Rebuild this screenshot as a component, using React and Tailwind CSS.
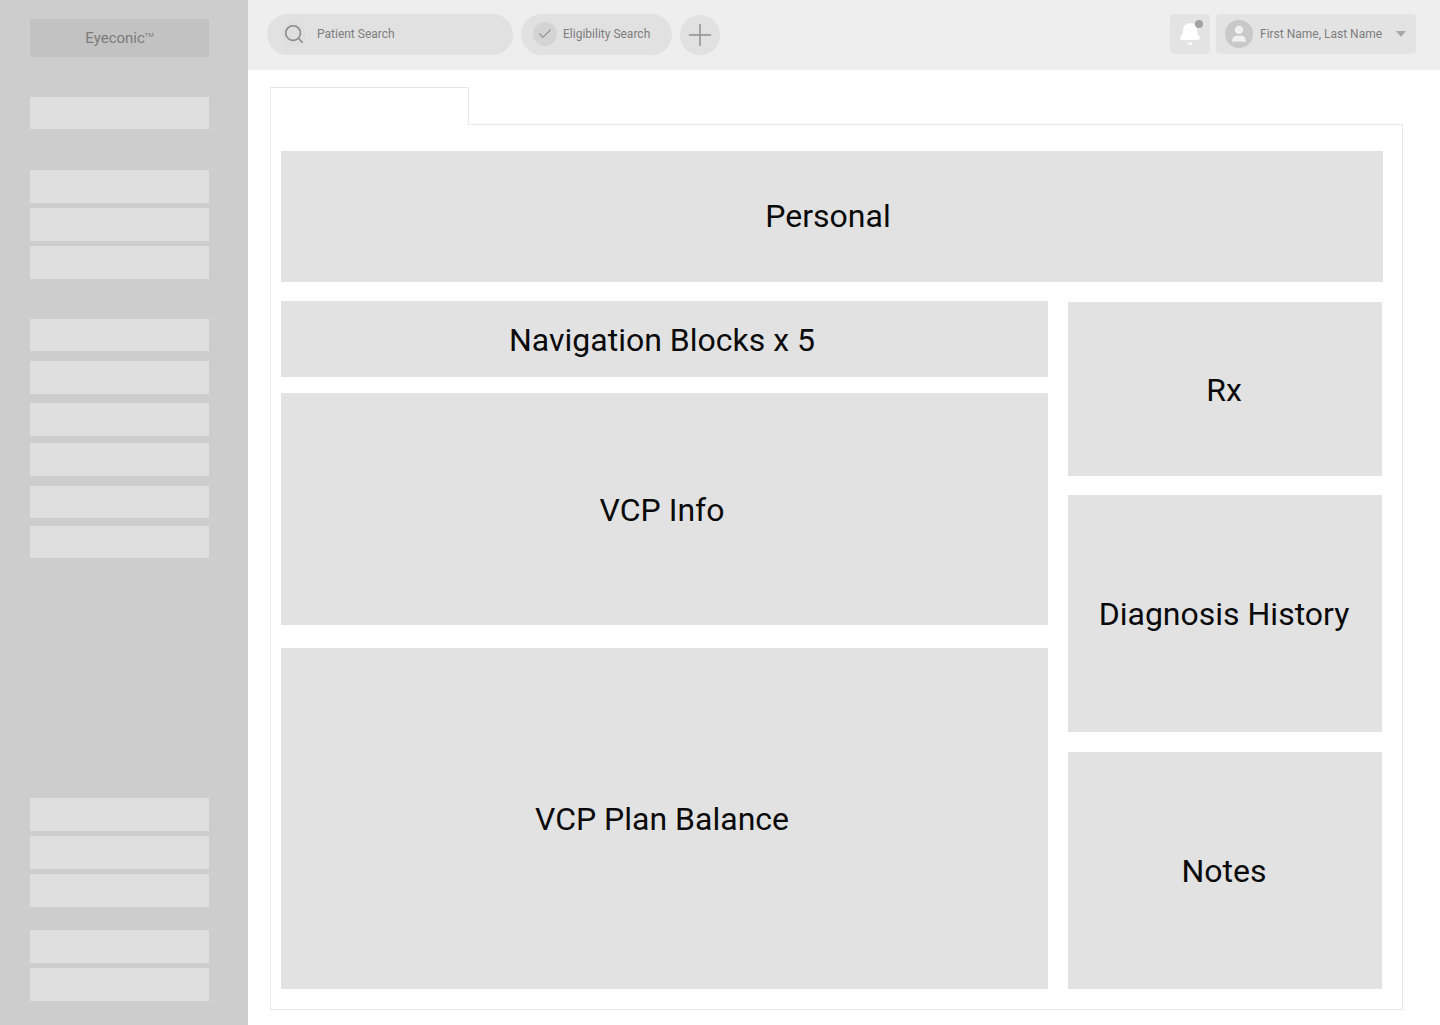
import { Search, Check, Plus, Bell, User } from "lucide-react";

const middleItems = [
  { h: 32, mt: 0 },
  { h: 33, mt: 10 },
  { h: 33, mt: 9 },
  { h: 33, mt: 7 },
  { h: 32, mt: 10 },
  { h: 32, mt: 8 },
];

const MenuBlock = ({ className }) => <div className={"bg-[#dfdfdf] " + className}></div>;

const Block = ({ label, className, textClass = "" }) => (
  <div className={"flex items-center justify-center bg-[#e2e2e2] text-[32px] text-[#0a0a0a] " + className}>
    <span className={textClass}>{label}</span>
  </div>
);

const Sidebar = () => (
  <aside className="flex w-[248px] shrink-0 flex-col bg-[#cdcdcd] pt-[19px] pr-[39px] pb-6 pl-[30px]">
    <div className="flex h-[38px] items-center justify-center bg-[#c2c2c2] text-[15px] text-[#7b7b7b]">
      Eyeconic<sup className="text-[6px]">TM</sup>
    </div>

    <MenuBlock className="mt-10 h-8" />

    <div className="mt-[41px] flex flex-col gap-[5px]">
      <MenuBlock className="h-[33px]" />
      <MenuBlock className="h-[33px]" />
      <MenuBlock className="h-[33px]" />
    </div>

    <div className="mt-10 flex flex-col">
      {middleItems.map((item, index) => (
        <div key={index} style={{ height: item.h, marginTop: item.mt }} className="bg-[#dfdfdf]"></div>
      ))}
    </div>

    <div className="mt-auto flex flex-col gap-[5px]">
      <MenuBlock className="h-[33px]" />
      <MenuBlock className="h-[33px]" />
      <MenuBlock className="h-[33px]" />
    </div>

    <div className="mt-[23px] flex flex-col gap-[5px]">
      <MenuBlock className="h-[33px]" />
      <MenuBlock className="h-[33px]" />
    </div>
  </aside>
);

const Header = () => (
  <header className="flex h-[70px] shrink-0 items-center bg-[#eeeeee] pr-6 pb-[2px] pl-[19px] text-[#7d7d7d]">
    <div className="flex h-[41px] w-[246px] items-center rounded-full bg-[#e1e1e1] pl-[15px]">
      <div className="flex h-6 w-6 items-center justify-center rounded-full bg-[#dedede]">
        <Search className="h-[22px] w-[22px] text-[#8a8a8a]" strokeWidth={1.75} />
      </div>
      <span className="ml-[11px] text-[12px]">Patient Search</span>
    </div>

    <div className="ml-2 flex h-[41px] w-[151px] items-center rounded-full bg-[#e1e1e1] pl-3">
      <div className="flex h-6 w-6 items-center justify-center rounded-full bg-[#d4d4d4]">
        <Check className="h-4 w-4 text-[#9a9a9a]" strokeWidth={2} />
      </div>
      <span className="ml-[6px] text-[12px]">Eligibility Search</span>
    </div>

    <div className="mt-[2px] ml-2 flex h-10 w-10 items-center justify-center rounded-full bg-[#e1e1e1]">
      <Plus className="h-9 w-9 text-[#8e8e8e]" strokeWidth={1} />
    </div>

    <div className="ml-auto flex h-10 w-10 items-center justify-center rounded-sm bg-[#e3e3e3]">
      <div className="relative">
        <Bell className="h-6 w-6 fill-white text-white" />
        <div className="absolute top-[-2px] right-[-1px] h-2 w-2 rounded-full bg-[#a3a3a3]"></div>
      </div>
    </div>

    <div className="ml-[6px] flex h-10 w-[200px] items-center rounded-sm bg-[#e3e3e3] pl-[9px]">
      <div className="flex h-7 w-7 items-center justify-center rounded-full bg-[#c9c9c9]">
        <User className="h-5 w-5 fill-[#f1f1f1] text-[#f1f1f1]" />
      </div>
      <span className="ml-[7px] text-[12px]">First Name, Last Name</span>
      <div className="ml-[14px] h-0 w-0 border-x-[5.5px] border-t-[6px] border-x-transparent border-t-[#a8a8a8]"></div>
    </div>
  </header>
);

export default function App() {
  return (
    <div className="flex h-[1025px] w-[1440px] overflow-hidden bg-white font-['Roboto',sans-serif]">
      <Sidebar />
      <div className="flex min-w-0 flex-1 flex-col">
        <Header />
        <main className="pt-[17px] pl-[22px]">
          <div className="relative z-10 -mb-px h-[38px] w-[199px] border border-b-0 border-[#e8e8e8] bg-white"></div>
          <section className="h-[886px] w-[1133px] border border-[#e8e8e8] px-[10px] pt-[26px]">
            <Block label="Personal" className="h-[131px] w-[1102px]" textClass="pr-2 pb-px" />

            <div className="mt-[19px] flex gap-5">
              <div className="flex w-[767px] flex-col">
                <Block label="Navigation Blocks x 5" className="h-[76px]" textClass="pt-px pr-[5px]" />
                <Block label="VCP Info" className="mt-4 h-[232px]" textClass="pt-px pr-[5px]" />
                <Block label="VCP Plan Balance" className="mt-[23px] h-[341px]" textClass="pr-[5px]" />
              </div>
              <div className="flex w-[314px] flex-col pt-px">
                <Block label="Rx" className="h-[174px]" textClass="pt-px pr-[2px]" />
                <Block label="Diagnosis History" className="mt-[19px] h-[237px]" textClass="pr-[2px]" />
                <Block label="Notes" className="mt-5 h-[237px]" textClass="pr-[2px]" />
              </div>
            </div>
          </section>
        </main>
      </div>
    </div>
  );
}
